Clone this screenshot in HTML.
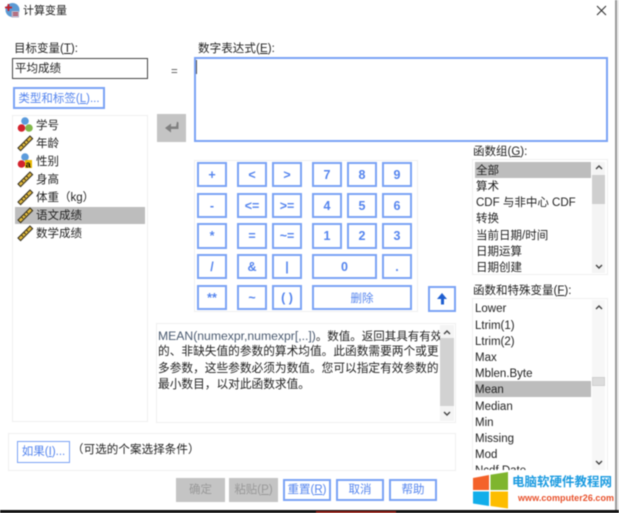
<!DOCTYPE html>
<html><head><meta charset="utf-8">
<style>
html,body{margin:0;padding:0;background:#fff}
#r{position:relative;width:619px;height:513px;overflow:hidden;background:#fff;font-family:"Liberation Sans","Noto Sans CJK SC",sans-serif;font-size:11.5px;color:#222;filter:blur(.4px)}
#r div,#r span.a{position:absolute;box-sizing:border-box}
.t{white-space:nowrap;line-height:16px;height:16px;transform:translateY(1px)}
.b{border:2px solid #7ba3f5;color:#5585ee;background:#fff;text-align:center;white-space:nowrap;font-size:11.5px;padding-top:1px}
.c{font-size:12.5px;font-weight:bold;padding-top:0}
.g{background:#c4c4c4;color:#999;text-align:center;white-space:nowrap;padding-top:1px}
.p{border:1.5px solid #efefef;background:#fff}
.s{background:#bdbdbd}
u{text-underline-offset:1px}
</style></head><body>
<div id="r">
<!-- title -->
<svg style="position:absolute;left:4px;top:2px" width="16" height="16" viewBox="0 0 16 16"><circle cx="8.5" cy="8" r="7" fill="#5b9bd5"/><rect x="7.5" y="9" width="7.5" height="6.500" fill="#b9b0c4"/><path d="M9 11h5M9 13h5" stroke="#b03040" stroke-width="1"/><path d="M1 5.500h7M4.500 2v7" stroke="#c8202a" stroke-width="1.800"/></svg>
<div class="t" style="left:23px;top:2px;font-size:11px">计算变量</div>
<svg style="position:absolute;left:596px;top:5px" width="11" height="11" viewBox="0 0 11 11"><path d="M1 1l9 9M10 1l-9 9" stroke="#333" stroke-width="1.100" fill="none"/></svg>

<!-- target -->
<div class="t" style="left:14px;top:40px">目标变量(<u>T</u>):</div>
<div style="left:12px;top:58px;width:136px;height:21px;border:1px solid #444;background:#fff;padding:3px 2px;line-height:15px">平均成绩</div>
<div class="t" style="left:171px;top:63px;color:#555">=</div>
<div class="b" style="left:13px;top:87px;width:92px;height:22px;line-height:18px;font-size:11.5px">类型和标签(<u>L</u>)...</div>

<!-- variable list -->
<div class="p" style="left:12px;top:115px;width:136px;height:307px"></div>
<div class="s" style="left:15px;top:207px;width:130px;height:17px"></div>
<svg style="position:absolute;left:0;top:0" width="40" height="245" viewBox="0 0 40 245">
<defs>
<g id="rl"><path d="M0 13L12 1l2.600 2.600L2.600 15.600z" fill="#e0b93c" stroke="#3a3320" stroke-width="1.100"/><path d="M3.500 10l1.700 1.700M6 7.500l1.700 1.700M8.500 5l1.700 1.700" stroke="#3a3320" stroke-width="1"/></g>
</defs>
<circle cx="25" cy="121" r="3.800" fill="#5b9bdc"/><circle cx="21.500" cy="128" r="3.800" fill="#d3222c"/><circle cx="29" cy="128" r="3.800" fill="#82b84a"/>
<use href="#rl" transform="translate(18,135)"/>
<circle cx="25" cy="157" r="3.800" fill="#5b9bdc"/><circle cx="21.500" cy="164" r="3.800" fill="#d3222c"/><rect x="25" y="160" width="7" height="8" fill="#e9b800"/><text x="25.600" y="167.400" font-size="9" font-weight="bold" fill="#111" font-family="Liberation Sans">a</text>
<use href="#rl" transform="translate(18,171)"/>
<use href="#rl" transform="translate(18,189)"/>
<use href="#rl" transform="translate(18,207)"/>
<use href="#rl" transform="translate(18,225)"/>
</svg>
<div class="t" style="left:36px;top:117px">学号</div>
<div class="t" style="left:36px;top:135px">年龄</div>
<div class="t" style="left:36px;top:153px">性别</div>
<div class="t" style="left:36px;top:171px">身高</div>
<div class="t" style="left:36px;top:189px">体重（kg）</div>
<div class="t" style="left:36px;top:207px">语文成绩</div>
<div class="t" style="left:36px;top:225px">数学成绩</div>

<!-- arrow button -->
<div class="g" style="left:157px;top:114px;width:29px;height:28px"></div>
<svg style="position:absolute;left:164px;top:120px" width="16" height="15" viewBox="0 0 16 15"><path d="M13 1.500l1.500 1V9H7v3.500L1 8l6-4.500V6.500h5z" fill="#808080"/></svg>

<!-- expression -->
<div class="t" style="left:198px;top:40px;letter-spacing:.1px">数字表达式(<u>E</u>):</div>
<div style="left:194px;top:57px;width:414px;height:85px;border:2px solid #7ba3f5;background:#fff"></div>
<div style="left:196px;top:60px;width:1px;height:14px;background:#555"></div>

<!-- calculator -->
<div class="p" style="left:194px;top:160px;width:224px;height:152px"></div>
<div class="b c" style="left:197px;top:162px;width:30px;height:25px;line-height:22px">+</div>
<div class="b c" style="left:237px;top:162px;width:30px;height:25px;line-height:22px">&lt;</div>
<div class="b c" style="left:272px;top:162px;width:30px;height:25px;line-height:22px">&gt;</div>
<div class="b c" style="left:312px;top:162px;width:30px;height:25px;line-height:22px">7</div>
<div class="b c" style="left:347px;top:162px;width:30px;height:25px;line-height:22px">8</div>
<div class="b c" style="left:382px;top:162px;width:30px;height:25px;line-height:22px">9</div>
<div class="b c" style="left:197px;top:193px;width:30px;height:25px;line-height:22px">-</div>
<div class="b c" style="left:237px;top:193px;width:30px;height:25px;line-height:22px">&lt;=</div>
<div class="b c" style="left:272px;top:193px;width:30px;height:25px;line-height:22px">&gt;=</div>
<div class="b c" style="left:312px;top:193px;width:30px;height:25px;line-height:22px">4</div>
<div class="b c" style="left:347px;top:193px;width:30px;height:25px;line-height:22px">5</div>
<div class="b c" style="left:382px;top:193px;width:30px;height:25px;line-height:22px">6</div>
<div class="b c" style="left:197px;top:223px;width:30px;height:26px;line-height:22px">*</div>
<div class="b c" style="left:237px;top:223px;width:30px;height:26px;line-height:22px">=</div>
<div class="b c" style="left:272px;top:223px;width:30px;height:26px;line-height:22px">~=</div>
<div class="b c" style="left:312px;top:223px;width:30px;height:26px;line-height:22px">1</div>
<div class="b c" style="left:347px;top:223px;width:30px;height:26px;line-height:22px">2</div>
<div class="b c" style="left:382px;top:223px;width:30px;height:26px;line-height:22px">3</div>
<div class="b c" style="left:197px;top:254px;width:30px;height:25px;line-height:22px">/</div>
<div class="b c" style="left:237px;top:254px;width:30px;height:25px;line-height:22px">&amp;</div>
<div class="b c" style="left:272px;top:254px;width:30px;height:25px;line-height:22px">|</div>
<div class="b c" style="left:312px;top:254px;width:65px;height:25px;line-height:22px">0</div>
<div class="b c" style="left:382px;top:254px;width:30px;height:25px;line-height:22px">.</div>
<div class="b c" style="left:197px;top:285px;width:30px;height:25px;line-height:22px">**</div>
<div class="b c" style="left:237px;top:285px;width:30px;height:25px;line-height:22px">~</div>
<div class="b c" style="left:272px;top:285px;width:30px;height:25px;line-height:22px">( )</div>
<div class="b" style="left:312px;top:285px;width:100px;height:25px;line-height:22px">删除</div>
<div class="b" style="left:428px;top:286px;width:28px;height:26px"></div>
<svg style="position:absolute;left:435px;top:292px" width="14" height="14" viewBox="0 0 14 14"><path d="M7 1L12 7H9V12.500H6V7H2z" fill="#1f5fd0"/></svg>

<!-- function group -->
<div class="t" style="left:473px;top:143px">函数组(<u>G</u>):</div>
<div class="p" style="left:472px;top:159px;width:136px;height:116px"></div>
<div class="s" style="left:475px;top:162px;width:116px;height:16px"></div>
<div class="t" style="left:476px;top:162px">全部</div>
<div class="t" style="left:476px;top:178px">算术</div>
<div class="t" style="left:476px;top:194px">CDF 与非中心 CDF</div>
<div class="t" style="left:476px;top:210px">转换</div>
<div class="t" style="left:476px;top:227px">当前日期/时间</div>
<div class="t" style="left:476px;top:243px">日期运算</div>
<div class="t" style="left:476px;top:259px">日期创建</div>
<div style="left:592px;top:162px;width:13px;height:111px;background:#f4f4f4"></div>
<div style="left:592px;top:175px;width:13px;height:29px;background:#cfcfcf"></div>
<svg style="position:absolute;left:595px;top:164px" width="8" height="6" viewBox="0 0 8 6"><path d="M1 5l3-3 3 3" stroke="#444" stroke-width="1.400" fill="none"/></svg>
<svg style="position:absolute;left:595px;top:264px" width="8" height="6" viewBox="0 0 8 6"><path d="M1 1l3 3 3-3" stroke="#444" stroke-width="1.400" fill="none"/></svg>

<!-- functions -->
<div class="t" style="left:473px;top:282px">函数和特殊变量(<u>F</u>):</div>
<div class="p" style="left:472px;top:298px;width:136px;height:175px;overflow:hidden"></div>
<div class="s" style="left:475px;top:381px;width:116px;height:16px"></div>
<div class="t" style="left:475px;top:300px">Lower</div>
<div class="t" style="left:475px;top:316.500px">Ltrim(1)</div>
<div class="t" style="left:475px;top:333px">Ltrim(2)</div>
<div class="t" style="left:475px;top:349px">Max</div>
<div class="t" style="left:475px;top:365px">Mblen.Byte</div>
<div class="t" style="left:475px;top:381px">Mean</div>
<div class="t" style="left:475px;top:397.500px">Median</div>
<div class="t" style="left:475px;top:413.500px">Min</div>
<div class="t" style="left:475px;top:430px">Missing</div>
<div class="t" style="left:475px;top:446px">Mod</div>
<div class="t" style="left:475px;top:462px">Ncdf.Date</div>
<div style="left:592px;top:300px;width:13px;height:170px;background:#f7f7f7"></div>
<div style="left:592px;top:377px;width:13px;height:9px;background:#dcdcdc;border:1px solid #cfcfcf"></div>
<svg style="position:absolute;left:595px;top:304px" width="8" height="6" viewBox="0 0 8 6"><path d="M1 5l3-3 3 3" stroke="#444" stroke-width="1.400" fill="none"/></svg>
<svg style="position:absolute;left:595px;top:460px" width="8" height="6" viewBox="0 0 8 6"><path d="M1 1l3 3 3-3" stroke="#444" stroke-width="1.400" fill="none"/></svg>

<!-- description -->
<div class="p" style="left:156px;top:323px;width:300px;height:100px"></div>
<div class="t" style="left:158px;top:326.500px;font-size:11.500px"><span style="color:#4a5a70;font-size:12.200px">MEAN(numexpr,numexpr[,..])</span>。数值。返回其具有有效</div>
<div class="t" style="left:158px;top:342.500px;font-size:11.700px">的、非缺失值的参数的算术均值。此函数需要两个或更</div>
<div class="t" style="left:158px;top:359.500px;font-size:11.700px">多参数，这些参数必须为数值。您可以指定有效参数的</div>
<div class="t" style="left:158px;top:375.500px;font-size:11.700px">最小数目，以对此函数求值。</div>
<div style="left:440px;top:325px;width:14px;height:96px;background:#f4f4f4"></div>
<div style="left:440px;top:338px;width:14px;height:68px;background:#d2d2d2"></div>
<svg style="position:absolute;left:443px;top:329px" width="8" height="6" viewBox="0 0 8 6"><path d="M1 5l3-3 3 3" stroke="#444" stroke-width="1.400" fill="none"/></svg>
<svg style="position:absolute;left:443px;top:411px" width="8" height="6" viewBox="0 0 8 6"><path d="M1 1l3 3 3-3" stroke="#444" stroke-width="1.400" fill="none"/></svg>

<!-- condition -->
<div class="p" style="left:8px;top:433px;width:448px;height:38px"></div>
<div class="b" style="left:17px;top:441px;width:53px;height:22px;border-width:1.500px;line-height:19px">如果(<u>I</u>)...</div>
<div class="t" style="left:72px;top:441px;letter-spacing:.1px">（可选的个案选择条件）</div>

<!-- buttons -->
<div class="g" style="left:176px;top:478px;width:49px;height:24px;line-height:23px">确定</div>
<div class="g" style="left:229px;top:478px;width:49px;height:24px;line-height:23px">粘贴(<u>P</u>)</div>
<div class="b" style="left:283px;top:479px;width:48px;height:22px;line-height:17px">重置(<u>R</u>)</div>
<div class="b" style="left:336px;top:479px;width:48px;height:22px;line-height:17px">取消</div>
<div class="b" style="left:389px;top:479px;width:48px;height:22px;line-height:17px">帮助</div>

<!-- watermark -->
<div style="left:472px;top:470px;width:143px;height:39px;background:#fff"></div>
<svg style="position:absolute;left:472px;top:471px" width="38" height="38" viewBox="0 0 38 38">
<path d="M1 7l16-3v15H1z" fill="#f4622a"/>
<path d="M18.500 3.700L36 1v18H18.500z" fill="#7fb52e"/>
<path d="M1 20.500h16v14.500l-16-2.500z" fill="#12aeea"/>
<path d="M18.500 20.500H36V37.500l-17.500-2.500z" fill="#fdbd00"/>
</svg>
<div class="t" style="left:512px;top:473px;font-size:12.500px;font-weight:bold;color:#1c9be0">电脑软硬件教程网</div>
<div class="t" style="left:518px;top:489px;font-size:9px;font-weight:bold;color:#e8502a;letter-spacing:.05px">www.computer26.com</div>

<!-- edges -->
<div style="left:615px;top:0;width:2px;height:511px;background:#9a9a9a"></div>
<div style="left:617px;top:0;width:2px;height:511px;background:#ececec"></div>
<div style="left:0;top:510px;width:619px;height:3px;background:#111"></div>
<div style="left:316px;top:511px;width:80px;height:2px;background:#8a1a12"></div>
</div>
</body></html>
